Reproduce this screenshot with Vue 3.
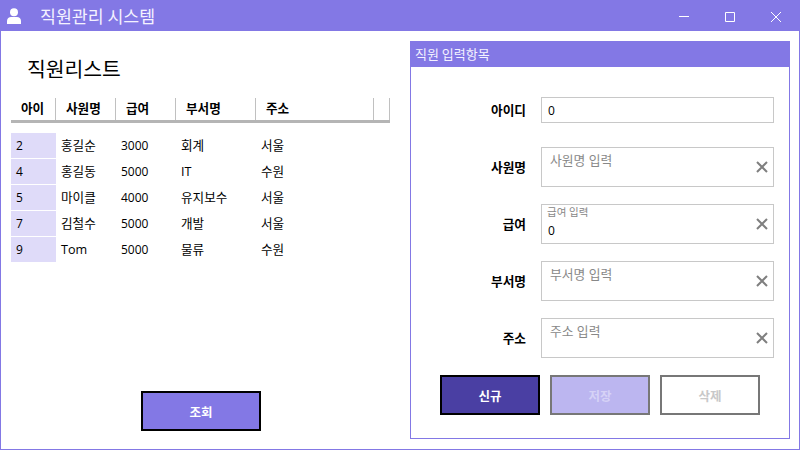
<script setup>
const columns = [
  { label: '아이', width: 45 },
  { label: '사원명', width: 60 },
  { label: '급여', width: 60 },
  { label: '부서명', width: 80 },
  { label: '주소', width: 118 },
  { label: '', width: 16 }
]
const employees = [
  { id: 2, name: '홍길순', pay: 3000, dept: '회계', addr: '서울' },
  { id: 4, name: '홍길동', pay: 5000, dept: 'IT', addr: '수원' },
  { id: 5, name: '마이클', pay: 4000, dept: '유지보수', addr: '서울' },
  { id: 7, name: '김철수', pay: 5000, dept: '개발', addr: '서울' },
  { id: 9, name: 'Tom', pay: 5000, dept: '물류', addr: '수원' }
]
const fields = [
  { label: '사원명', hint: '사원명 입력', value: '' },
  { label: '급여', hint: '급여 입력', value: '0' },
  { label: '부서명', hint: '부서명 입력', value: '' },
  { label: '주소', hint: '주소 입력', value: '' }
]
</script>

<template>
  <div class="window">
    <header class="titlebar">
      <svg class="user" width="14" height="16" viewBox="0 0 14 16">
        <circle cx="7" cy="4.2" r="4" fill="#fff" />
        <path d="M0 16V13C0 10.5 2 9 4 9H10C12 9 14 10.5 14 13V16Z" fill="#fff" />
      </svg>
      <span class="app-title">직원관리 시스템</span>
      <div class="controls">
        <svg width="46" height="30" viewBox="0 0 46 30"><path d="M18 15.5H28" stroke="#fff" fill="none" /></svg>
        <svg width="46" height="30" viewBox="0 0 46 30"><path d="M18.5 11.5H27.5V20.5H18.5Z" stroke="#fff" fill="none" /></svg>
        <svg width="46" height="30" viewBox="0 0 46 30"><path d="M18 11L28 21M28 11L18 21" stroke="#fff" fill="none" /></svg>
      </div>
    </header>
    <main class="content">
      <section class="list">
        <h1 class="list-title">직원리스트</h1>
        <div class="thead">
          <div v-for="c in columns" :key="c.label" class="th" :style="{ width: c.width + 'px' }">{{ c.label }}</div>
        </div>
        <div class="tbody">
          <div v-for="e in employees" :key="e.id" class="tr">
            <div class="td id">{{ e.id }}</div>
            <div class="td name">{{ e.name }}</div>
            <div class="td pay">{{ e.pay }}</div>
            <div class="td dept">{{ e.dept }}</div>
            <div class="td addr">{{ e.addr }}</div>
          </div>
        </div>
        <div class="list-action">
          <button class="btn query">조회</button>
        </div>
      </section>
      <section class="panel">
        <h2 class="panel-head">직원 입력항목</h2>
        <div class="form">
          <div class="row first">
            <label class="lbl">아이디</label>
            <div class="input short">0</div>
          </div>
          <div v-for="f in fields" :key="f.label" class="row">
            <label class="lbl">{{ f.label }}</label>
            <div class="input tall" :class="{ filled: f.value }">
              <span class="hint">{{ f.hint }}</span>
              <span v-if="f.value" class="val">{{ f.value }}</span>
              <svg class="clear" width="12" height="12" viewBox="0 0 12 12">
                <path d="M1 1L11 11M11 1L1 11" stroke="#7f7f7f" stroke-width="2" fill="none" />
              </svg>
            </div>
          </div>
          <div class="buttons">
            <button class="btn new">신규</button>
            <button class="btn save">저장</button>
            <button class="btn del">삭제</button>
          </div>
        </div>
      </section>
    </main>
  </div>
</template>

<style>
html, body { margin: 0; background: #fff; }
</style>

<style scoped>
.window {
  box-sizing: border-box;
  width: 800px;
  height: 450px;
  border: 1px solid #8378e5;
  border-top: 0;
  display: flex;
  flex-direction: column;
  overflow: hidden;
  font-family: "Open Sans", "Noto Sans CJK KR", sans-serif;
  font-size: 12px;
  color: #000;
  background: #fff;
}
.titlebar {
  height: 31px;
  margin: 0 -1px;
  flex: none;
  background: #8378e5;
  display: flex;
  align-items: center;
  padding: 0 1px 0 7px;
  color: #fff;
}
.user { flex: none; }
.app-title { margin-left: 19px; font-size: 17.3px; font-family: "Noto Sans CJK KR", sans-serif; color: #f4f2ff; }
.controls { margin-left: auto; display: flex; }
.controls svg { display: block; }
.content { flex: 1; display: flex; min-height: 0; }
.list { width: 409px; flex: none; padding-left: 10px; box-sizing: border-box; display: flex; flex-direction: column; }
.list-title { margin: 24px 0 0 16px; font-size: 20.4px; line-height: 26px; font-weight: 400; font-family: "Noto Sans CJK KR", sans-serif; }
.thead { display: flex; width: 379px; height: 22px; margin-top: 17px; border-bottom: 3px solid #b5b5b5; }
.th { box-sizing: border-box; border-right: 1px solid #c0c0c0; font-size: 12.6px; font-weight: 700; line-height: 22px; text-align: left; padding-left: 10px; }
.tbody { margin-top: 10px; display: flex; flex-direction: column; }
.tr { display: flex; height: 26px; line-height: 25px; }
.td { padding-left: 5px; box-sizing: border-box; height: 25px; }
.id { width: 45px; background: #dfdbf9; }
.name { width: 60px; font-size: 12.6px; }
.pay { width: 60px; }
.dept { width: 80px; font-size: 12.6px; }
.addr { width: 80px; font-size: 12.6px; }
.list-action { margin-top: auto; margin-bottom: 18px; padding-left: 130px; }
.btn {
  box-sizing: border-box;
  height: 40px;
  font: 700 12.5px "Noto Sans CJK KR", sans-serif;
  border: 2px solid #000;
  padding: 0;
}
.query { width: 120px; background: #8378e5; color: #fff; display: block; }
.panel { width: 380px; height: 398px; flex: none; margin-top: 10px; box-sizing: border-box; border: 1px solid #8378e5; }
.panel-head { margin: 0; height: 25px; line-height: 23px; padding-left: 4px; background: #8378e5; color: #f4f2ff; font-size: 13px; font-weight: 400; font-family: "Noto Sans CJK KR", sans-serif; }
.form { padding-top: 30px; display: flex; flex-direction: column; gap: 17px; }
.row { display: flex; align-items: center; }
.row.first { margin-bottom: 7px; }
.lbl { width: 115px; margin-right: 15px; padding-bottom: 2px; text-align: right; font-size: 12.7px; font-weight: 700; }
.input { box-sizing: border-box; width: 233px; border: 1px solid #c8c8c8; position: relative; }
.short { height: 26px; line-height: 25px; padding-left: 6px; }
.tall { height: 40px; }
.hint { position: absolute; left: 8px; top: 3px; font-size: 12.8px; line-height: 18px; color: #888; }
.filled .hint { left: 5px; top: 0; font-size: 10.5px; line-height: 14px; }
.val { position: absolute; left: 6px; top: 17px; line-height: 18px; }
.clear { position: absolute; right: 5px; top: 13px; }
.buttons { display: flex; gap: 10px; padding-left: 29px; }
.new { width: 100px; background: #4a3fa3; color: #fff; }
.save { width: 100px; background: #bcb6f0; color: #d6d2f6; border-color: #777; }
.del { width: 100px; background: #fff; color: #c8c8c8; border-color: #777; }
</style>
